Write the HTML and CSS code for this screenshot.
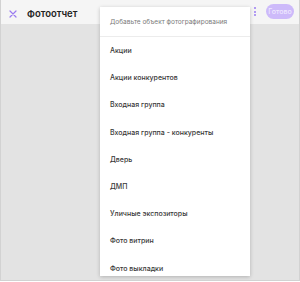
FILE: index.html
```html
<!DOCTYPE html>
<html lang="ru">
<head>
    <meta charset="UTF-8">
    <meta name="viewport" content="width=device-width, initial-scale=1.0">
    <title>Фотоотчет</title>
    <link rel="stylesheet" href="styles.css">
</head>
<body>
    <div class="screen">
        <div class="topbar">
            <button class="close-button" aria-label="Закрыть">
                <svg width="8" height="8" viewBox="0 0 8 8">
                    <path d="M1 1L7 7M7 1L1 7" stroke="#9a7bf0" stroke-width="1.2" stroke-linecap="round"/>
                </svg>
            </button>
            <div class="title">Фотоотчет</div>
            <div class="spacer"></div>
            <button class="more-button" aria-label="Ещё">
                <span></span><span></span><span></span>
            </button>
            <button class="done-button">Готово</button>
        </div>
        <div class="content"></div>

        <div class="dropdown">
            <div class="dropdown-header">Добавьте объект фотографирования</div>
            <ul class="dropdown-list">
                <li>Акции</li>
                <li>Акции конкурентов</li>
                <li>Входная группа</li>
                <li>Входная группа - конкуренты</li>
                <li>Дверь</li>
                <li>ДМП</li>
                <li>Уличные экспозиторы</li>
                <li>Фото витрин</li>
                <li>Фото выкладки</li>
            </ul>
        </div>
    </div>
</body>
</html>
```

FILE: styles.css
```css
html, body {
    margin: 0;
    padding: 0;
}
body {
    font-family: Inter, "Noto Sans", sans-serif;
    width: 300px;
    height: 282px;
    background: #ffffff;
}
.screen {
    position: relative;
    width: 298px;
    height: 280px;
    border: 1px solid #d2d2d2;
    border-top: none;
    display: flex;
    flex-direction: column;
    overflow: hidden;
}
.topbar {
    height: 24px;
    background: #f5f5f5;
    display: flex;
    align-items: center;
    padding: 0 5px 0 7px;
    flex-shrink: 0;
}
.close-button {
    border: none;
    background: none;
    padding: 0;
    width: 10px;
    height: 10px;
    display: flex;
    align-items: center;
    justify-content: center;
    margin-top: 3px;
}
.title {
    margin-left: 9px;
    margin-top: 3px;
    font-size: 9.5px;
    font-weight: 600;
    color: #222;
}
.spacer {
    flex: 1;
}
.more-button {
    border: none;
    background: none;
    padding: 0;
    width: 4px;
    display: flex;
    flex-direction: column;
    gap: 1.5px;
    align-items: center;
    margin-right: 9px;
    margin-top: -1px;
}
.more-button span {
    width: 2px;
    height: 2px;
    border-radius: 50%;
    background: #9a7bf0;
}
.done-button {
    border: none;
    border-radius: 8px;
    background: #cdbafa;
    color: #efe8ff;
    font-family: inherit;
    font-size: 7px;
    font-weight: 500;
    width: 28px;
    height: 15px;
    padding: 0;
    margin-top: -2px;
}
.content {
    flex: 1;
    background: #e3e3e3;
}
.dropdown {
    position: absolute;
    left: 99px;
    top: 7px;
    width: 150px;
    height: 269px;
    background: #ffffff;
    box-shadow: 0 1px 4px rgba(0, 0, 0, 0.22);
    overflow: hidden;
}
.dropdown-header {
    height: 28px;
    padding: 0 10px;
    display: flex;
    align-items: center;
    margin-top: 1px;
    border-bottom: 1px solid #ececec;
    font-size: 6.5px;
    color: #7a7a7a;
}
.dropdown-list {
    list-style: none;
    margin: 0;
    padding: 0;
}
.dropdown-list li {
    height: 27.2px;
    padding: 0 10px;
    display: flex;
    align-items: center;
    font-size: 7px;
    font-weight: 500;
    color: #383838;
}
```
